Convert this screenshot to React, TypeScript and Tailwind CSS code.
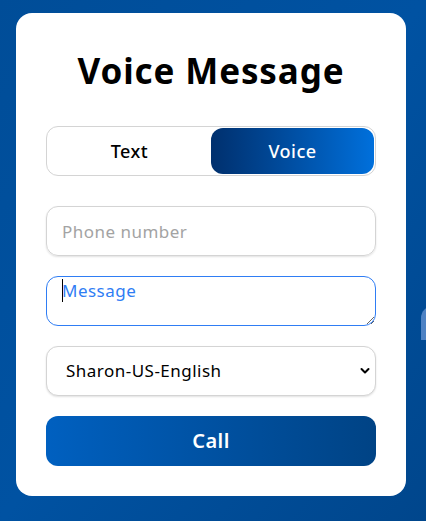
import React from 'react';

const font = { fontFamily: '"Noto Sans", "Open Sans", sans-serif' };

const App: React.FC = () => {
    return (
        <div
            className="relative h-[521px] w-full overflow-hidden bg-gradient-to-br from-[#004d98] via-[#0052a2] to-[#00468c] tracking-[0.03em]"
            style={font}
        >
            {/* Card */}
            <div className="ml-[16px] mt-[13px] h-[483px] w-[390px] rounded-2xl bg-white px-[30px] pt-[37px]">
                <h1 className="text-center text-[35px] font-bold leading-[42px] tracking-[0.025em] text-black">
                    Voice Message
                </h1>

                {/* Toggle */}
                <div className="mt-[34px] flex h-[50px] rounded-xl border border-[#d4d4d4] p-px">
                    <button className="flex-1 text-[18px] font-medium text-black">Text</button>
                    <button className="flex-1 rounded-xl bg-gradient-to-r from-[#00306e] to-[#0070dc] text-[18px] font-medium text-white">
                        Voice
                    </button>
                </div>

                {/* Phone */}
                <input
                    type="text"
                    placeholder="Phone number"
                    className="mt-[30px] block h-[50px] w-full rounded-xl border border-[#d4d4d4] px-[15px] text-[17px] text-black shadow-[0_1px_2px_rgba(0,0,0,0.12)] outline-none placeholder:text-[#a3a3a3]"
                />

                {/* Message */}
                <div className="relative mt-[20px]">
                    <textarea
                        placeholder="Message"
                        className="block h-[50px] w-full rounded-xl border-[1.5px] border-[#2f7df4] px-[15px] py-px text-[17px] text-black outline-none placeholder:text-[#2f7df4]"
                    />
                    <span className="absolute left-[16px] top-[3px] h-[23px] w-px bg-black" />
                </div>

                {/* Voice select */}
                <div className="relative mt-[20px]">
                    <select
                        defaultValue="sharon"
                        className="block h-[50px] w-full appearance-none rounded-xl border border-[#d4d4d4] bg-white px-[19px] text-[17px] text-black shadow-[0_1px_2px_rgba(0,0,0,0.12)] outline-none"
                    >
                        <option value="sharon">Sharon-US-English</option>
                    </select>
                    <svg
                        className="pointer-events-none absolute right-[6px] top-[21px] h-[8px] w-[10px]"
                        viewBox="0 0 10 8"
                        fill="none"
                    >
                        <path d="M1.5 2 L5 5.5 L8.5 2" stroke="black" strokeWidth="2" strokeLinecap="round" strokeLinejoin="round" />
                    </svg>
                </div>

                {/* Call */}
                <button className="mt-[20px] h-[50px] w-full rounded-xl bg-gradient-to-r from-[#0060c0] to-[#004385] text-[20px] font-semibold text-white">
                    Call
                </button>
            </div>

            {/* partially hidden element at right edge */}
            <div className="absolute left-[421px] top-[306px] h-[34px] w-[20px] rounded-tl-xl bg-[#4d82c4]" />
        </div>
    );
};

export default App;
